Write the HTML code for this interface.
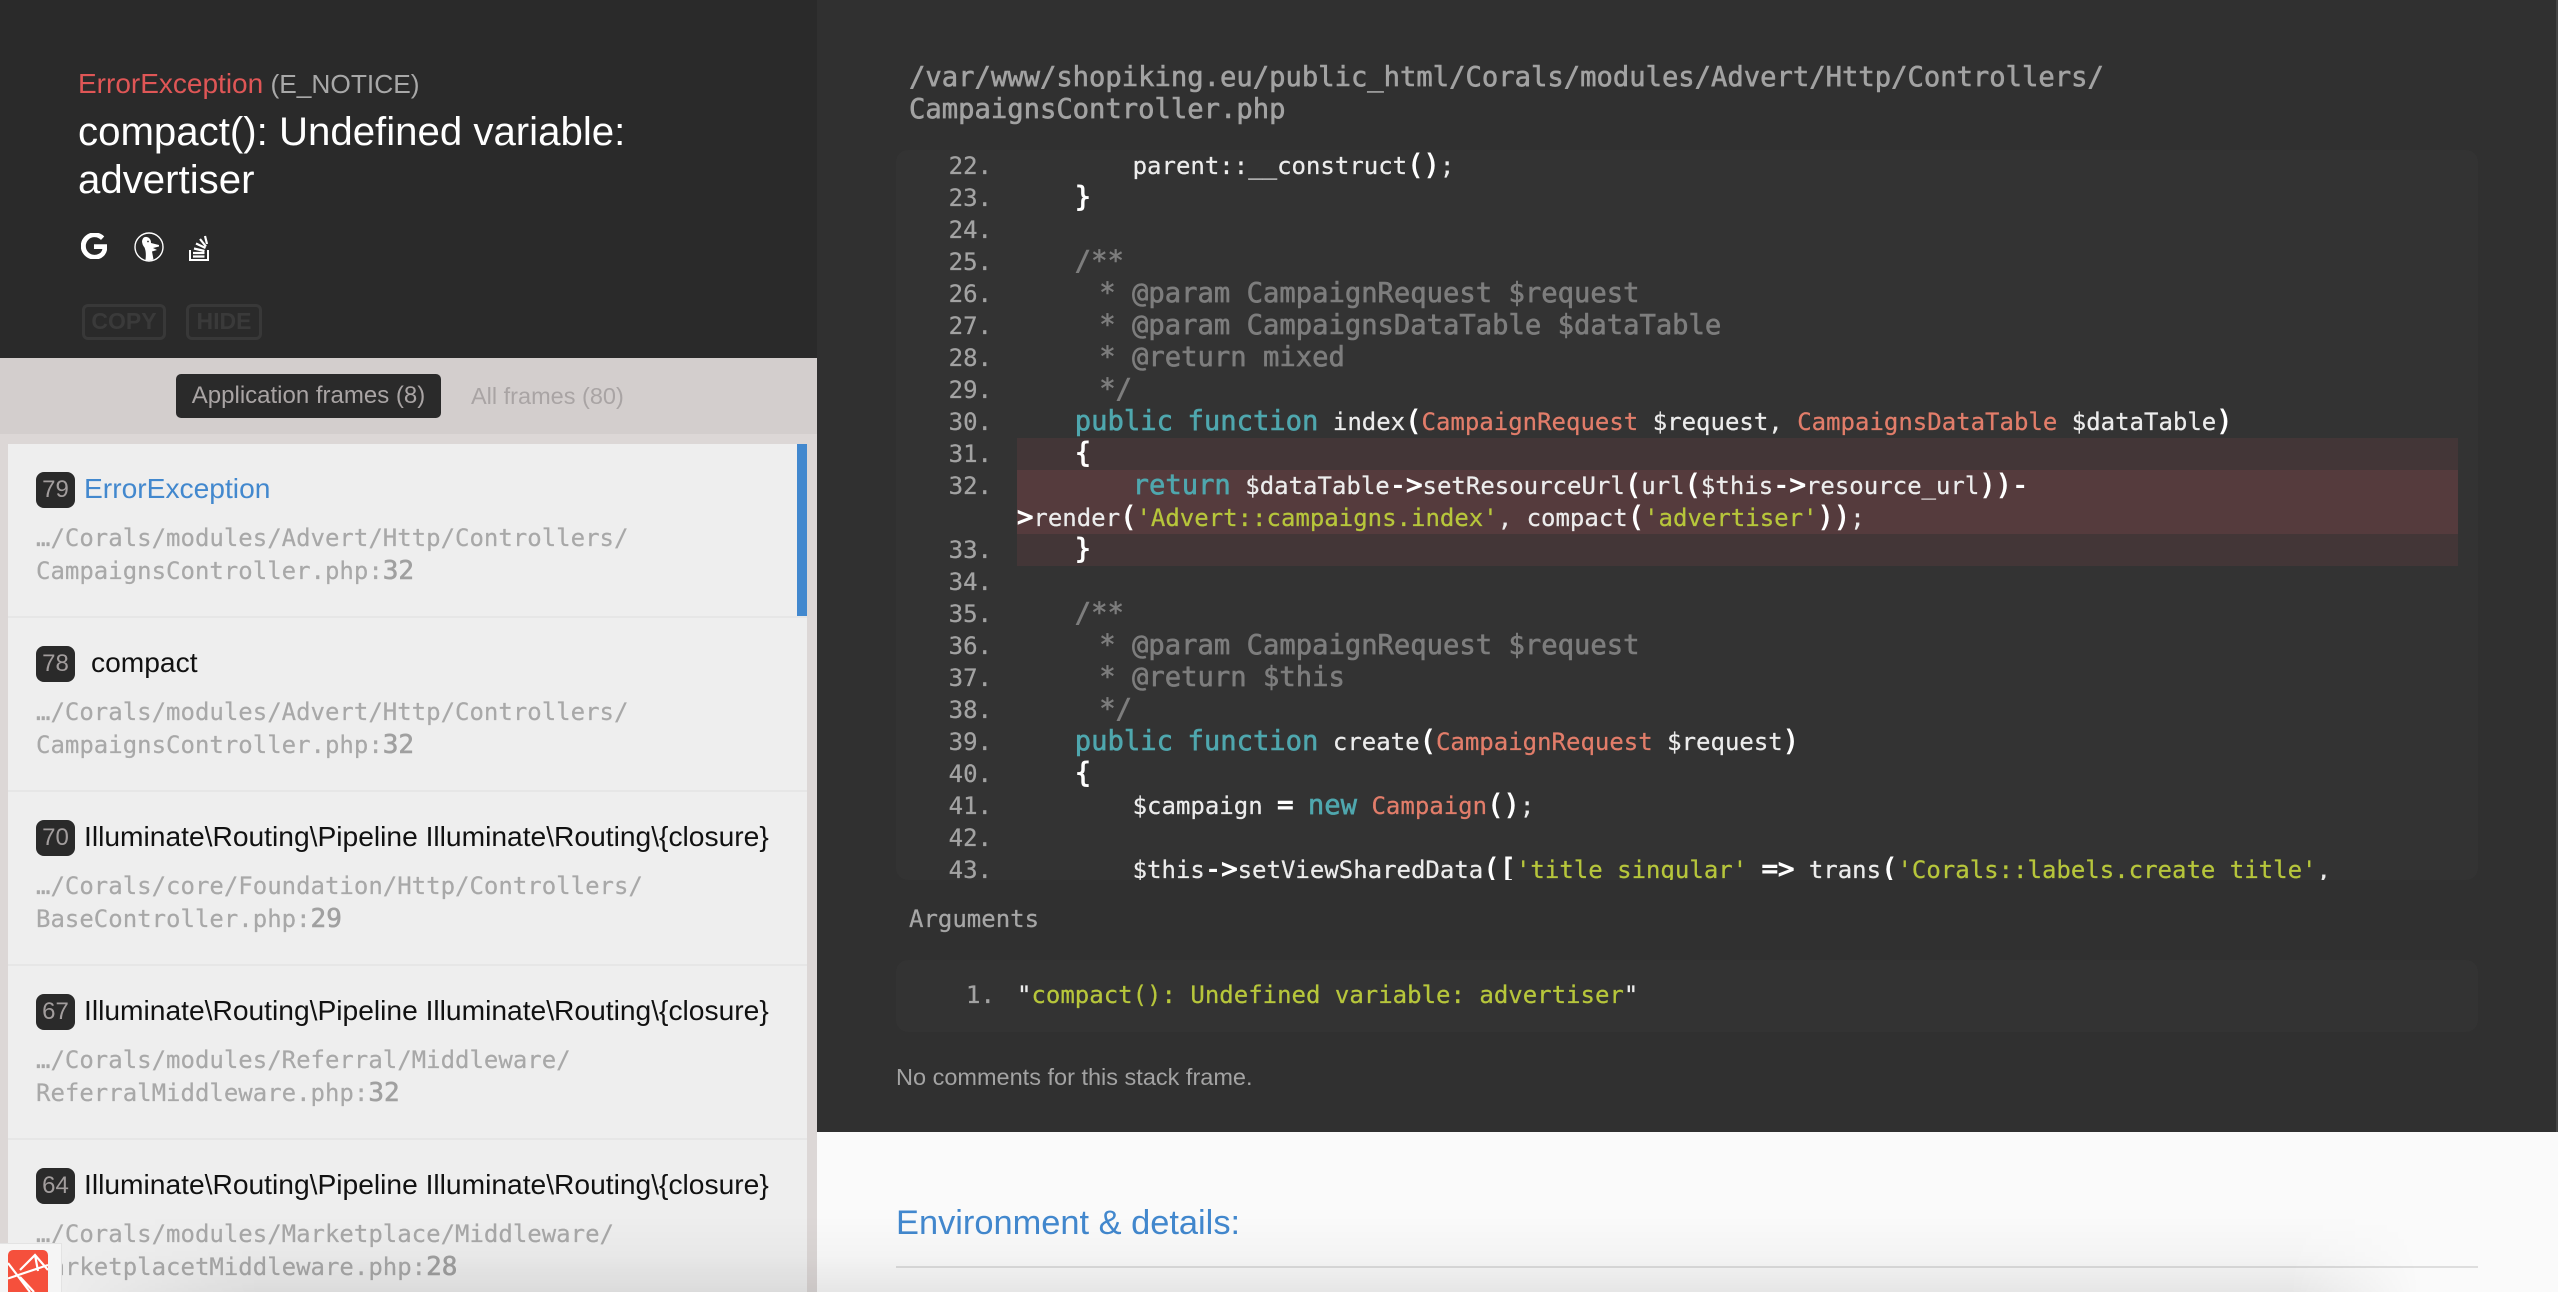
<!DOCTYPE html>
<html><head><meta charset="utf-8"><title>ErrorException</title>
<style>
*{box-sizing:border-box}
html,body{margin:0;padding:0;width:2558px;height:1292px;overflow:hidden;background:#fafafa;font-family:"Liberation Sans",Arial,sans-serif}
.a{position:absolute;white-space:pre}
.m{font-family:"DejaVu Sans Mono","Liberation Mono",monospace}
.item{position:absolute;left:8px;width:799px;height:172px;background:#eee}
.sep{position:absolute;left:8px;width:799px;height:2px;background:#e6e6e6}
.badge{position:absolute;left:28px;top:28px;width:39px;height:36px;background:#2a2a2a;border-radius:8px;color:#a29d9d;font-size:24px;line-height:36px;text-align:center}
.lab{position:absolute;left:76px;top:27px;font-size:28.2px;line-height:34px;color:#111;white-space:pre}
.path{position:absolute;left:28px;top:78px;font-family:"DejaVu Sans Mono",monospace;font-size:24px;line-height:32.6px;color:#a8a8a8;white-space:pre;-webkit-text-stroke:.2px #a8a8a8}
.path b{color:#a0a0a0;font-weight:normal;font-size:26px;line-height:0;-webkit-text-stroke:.6px #a0a0a0}
.code{font-family:"DejaVu Sans Mono",monospace;font-size:24px;line-height:32px;color:#ececec;margin:0;white-space:pre;-webkit-text-stroke:.25px}
.c,.k,.p{font-size:27.2px;line-height:0;font-weight:normal;-webkit-text-stroke:.6px}
.c{color:#7d7d7d}.k{color:#4fa7ae}.t{color:#e27d6a}.s{color:#b7c63b}.p{color:#fff;-webkit-text-stroke:.9px}
.i{margin-left:24.5px}
</style></head>
<body>
<div class="a" style="left:0;top:0;width:817px;height:358px;background:#2a2a2a"></div>
<div class="a" style="left:78px;top:67px;font-size:26.3px;line-height:34px;color:#a8a8a8"><span style="color:#df5656;font-size:28px;line-height:0">ErrorException</span> (E_NOTICE)</div>
<div class="a" style="left:78px;top:108px;font-size:40.2px;line-height:48px;color:#fff">compact(): Undefined variable:
advertiser</div>

<svg class="a" style="left:81px;top:233px" width="26" height="26" viewBox="2 2 19.5 20"><path fill="#fff" stroke="#fff" stroke-width=".9" d="M21.35 11.1h-9.17v2.73h6.51c-.33 3.81-3.5 5.44-6.5 5.44C8.36 19.27 5 16.25 5 12c0-4.1 3.2-7.27 7.2-7.27 3.09 0 4.9 1.97 4.9 1.97L19 4.72S16.56 2 12.1 2C6.42 2 2.03 6.8 2.03 12c0 5.05 4.13 10 10.22 10 5.35 0 9.25-3.67 9.25-9.09 0-1.15-.15-1.81-.15-1.81z"/></svg>
<svg class="a" style="left:134px;top:232px" width="30" height="30" viewBox="0 0 30 30"><circle cx="15" cy="15" r="14" fill="#2a2a2a" stroke="#fff" stroke-width="1.4"/><path fill="#fff" d="M8 9Q9 4 13 5 17 6 17 11L25 13 25 14.500 19 16 23 18 18 19.500 19.500 27.500 Q15 29 11.500 28 12.500 20 10.500 15.500 8 12.500 8 9Z"/><circle cx="14" cy="9.500" r=".9" fill="#2a2a2a"/></svg>
<svg class="a" style="left:189px;top:233px" width="22" height="28" viewBox="0 0 22 28"><path fill="none" stroke="#fff" stroke-width="2" d="M1 17V27H19V17"/><path fill="none" stroke="#fff" stroke-width="2.2" d="M4 23.500H15.500M4 20H15.500M5 15.500L15.500 18M7 10.500L16.500 15M11 6L17 13.500M16 3L18 11"/></svg>

<div class="a" style="left:82px;top:304px;width:84px;height:36px;border:3.500px solid #383838;border-radius:6px;color:#3a3a3a;font-size:23px;font-weight:bold;line-height:29px;text-align:center">COPY</div>
<div class="a" style="left:186px;top:304px;width:76px;height:36px;border:3.500px solid #383838;border-radius:6px;color:#3a3a3a;font-size:23px;font-weight:bold;line-height:29px;text-align:center">HIDE</div>

<div class="a" style="left:0;top:358px;width:817px;height:76px;background:#d3cecd"></div>
<div class="a" style="left:176px;top:374px;width:265px;height:44px;background:#2a2a2a;border-radius:5px;color:#a9a4a4;font-size:24px;line-height:44px;text-align:center">Application frames (8)</div>
<div class="a" style="left:471px;top:374px;height:44px;color:#a9a4a4;font-size:23.500px;line-height:44px">All frames (80)</div>
<div class="a" style="left:0;top:434px;width:817px;height:858px;background:#dcd7d6"></div>

<div class="item" style="top:444px"><div class="badge">79</div><div class="lab" style="color:#4288ce">ErrorException</div><div class="path">…/Corals/modules/Advert/Http/Controllers/
CampaignsController.php:<b>32</b></div><div style="position:absolute;right:0;top:0;width:10px;height:172px;background:#4288ce"></div></div>
<div class="sep" style="top:616px"></div>
<div class="item" style="top:618px;height:172px"><div class="badge">78</div><div class="lab" style="left:83px">compact</div><div class="path">…/Corals/modules/Advert/Http/Controllers/
CampaignsController.php:<b>32</b></div></div>
<div class="sep" style="top:790px"></div>
<div class="item" style="top:792px"><div class="badge">70</div><div class="lab">Illuminate\Routing\Pipeline Illuminate\Routing\{closure}</div><div class="path">…/Corals/core/Foundation/Http/Controllers/
BaseController.php:<b>29</b></div></div>
<div class="sep" style="top:964px"></div>
<div class="item" style="top:966px"><div class="badge">67</div><div class="lab">Illuminate\Routing\Pipeline Illuminate\Routing\{closure}</div><div class="path">…/Corals/modules/Referral/Middleware/
ReferralMiddleware.php:<b>32</b></div></div>
<div class="sep" style="top:1138px"></div>
<div class="item" style="top:1140px;height:152px"><div class="badge">64</div><div class="lab">Illuminate\Routing\Pipeline Illuminate\Routing\{closure}</div><div class="path">…/Corals/modules/Marketplace/Middleware/
MarketplacetMiddleware.php:<b>28</b></div></div>

<div class="a" style="left:817px;top:0;width:1741px;height:1132px;background:#303030"></div>
<div class="a" style="left:2556px;top:0;width:2px;height:1132px;background:#444"></div>
<div class="a m" style="left:909px;top:62px;font-size:27.2px;line-height:32px;color:#a2a2a2;-webkit-text-stroke:.6px #a2a2a2">/var/www/shopiking.eu/public_html/Corals/modules/Advert/Http/Controllers/
CampaignsController.php</div>

<div class="a" style="left:896px;top:150px;width:1582px;height:730px;background:#333;border-radius:12px;overflow:hidden">
<div class="a" style="left:121px;top:288px;width:1441px;height:32px;background:#433637"></div>
<div class="a" style="left:121px;top:320px;width:1441px;height:64px;background:#553b3d"></div>
<div class="a" style="left:121px;top:384px;width:1441px;height:32px;background:#433637"></div>
<pre class="a code" style="left:0;top:0;width:96px;text-align:right;color:#a3a3a3">22.
23.
24.
25.
26.
27.
28.
29.
30.
31.
32.

33.
34.
35.
36.
37.
38.
39.
40.
41.
42.
43.</pre>
<pre class="a code" style="left:121px;top:0">        parent::__construct<span class="p">()</span>;
    <span class="p">}</span>

    <span class="c">/**</span>
    <span class="c i">* @param CampaignRequest $request</span>
    <span class="c i">* @param CampaignsDataTable $dataTable</span>
    <span class="c i">* @return mixed</span>
    <span class="c i">*/</span>
    <span class="k">public</span> <span class="k">function</span> index<span class="p">(</span><span class="t">CampaignRequest</span> $request, <span class="t">CampaignsDataTable</span> $dataTable<span class="p">)</span>
    <span class="p">{</span>
        <span class="k">return</span> $dataTable<span class="p">-&gt;</span>setResourceUrl<span class="p">(</span>url<span class="p">(</span>$this<span class="p">-&gt;</span>resource_url<span class="p">))-</span>
<span class="p">&gt;</span>render<span class="p">(</span><span class="s">'Advert::campaigns.index'</span>, compact<span class="p">(</span><span class="s">'advertiser'</span><span class="p">))</span>;
    <span class="p">}</span>

    <span class="c">/**</span>
    <span class="c i">* @param CampaignRequest $request</span>
    <span class="c i">* @return $this</span>
    <span class="c i">*/</span>
    <span class="k">public</span> <span class="k">function</span> create<span class="p">(</span><span class="t">CampaignRequest</span> $request<span class="p">)</span>
    <span class="p">{</span>
        $campaign <span class="p">=</span> <span class="k">new</span> <span class="t">Campaign</span><span class="p">()</span>;

        $this<span class="p">-&gt;</span>setViewSharedData<span class="p">([</span><span class="s">'title_singular'</span> <span class="p">=&gt;</span> trans<span class="p">(</span><span class="s">'Corals::labels.create_title'</span>,</pre>
</div>

<div class="a code" style="left:909px;top:903px;color:#a6a6a6">Arguments</div>
<div class="a" style="left:896px;top:960px;width:1582px;height:72px;background:#333;border-radius:12px"></div>
<pre class="a code" style="left:966px;top:979px;color:#a3a3a3">1.</pre>
<pre class="a code" style="left:1017px;top:979px">"<span class="s">compact(): Undefined variable: advertiser</span>"</pre>
<div class="a" style="left:896px;top:1060px;font-size:23.500px;line-height:34px;color:#a3a3a3">No comments for this stack frame.</div>

<div class="a" style="left:817px;top:1132px;width:1741px;height:160px;background:#fafafa"></div>
<div class="a" style="left:896px;top:1200px;font-size:34.400px;line-height:46px;color:#4288ce">Environment &amp; details:</div>
<div class="a" style="left:896px;top:1266px;width:1582px;height:2px;background:#dedede"></div>

<div class="a" style="left:0;top:1215px;width:2558px;height:77px;background:linear-gradient(to bottom,rgba(0,0,0,0),rgba(0,0,0,.025) 52%,rgba(0,0,0,.08));-webkit-mask-image:linear-gradient(to right,transparent 50px,#000 260px,#000 2290px,transparent 2420px);mask-image:linear-gradient(to right,transparent 50px,#000 260px,#000 2290px,transparent 2420px)"></div>

<div class="a" style="left:0;top:1243px;width:62px;height:49px;background:#f5f5f5;border:1px solid #e3e3e3;border-left:0;border-bottom:0"></div>
<svg class="a" style="left:8px;top:1250px" width="40" height="42" viewBox="0 0 40 42"><rect width="40" height="52" rx="5" fill="#f5503c"/><path fill="none" stroke="#fff" stroke-width="2.200" d="M0 13L22 42M0 28.500L40 15M12 20L27 5L40 20M12 27L26 42M27 5L30 21"/></svg>
</body></html>
